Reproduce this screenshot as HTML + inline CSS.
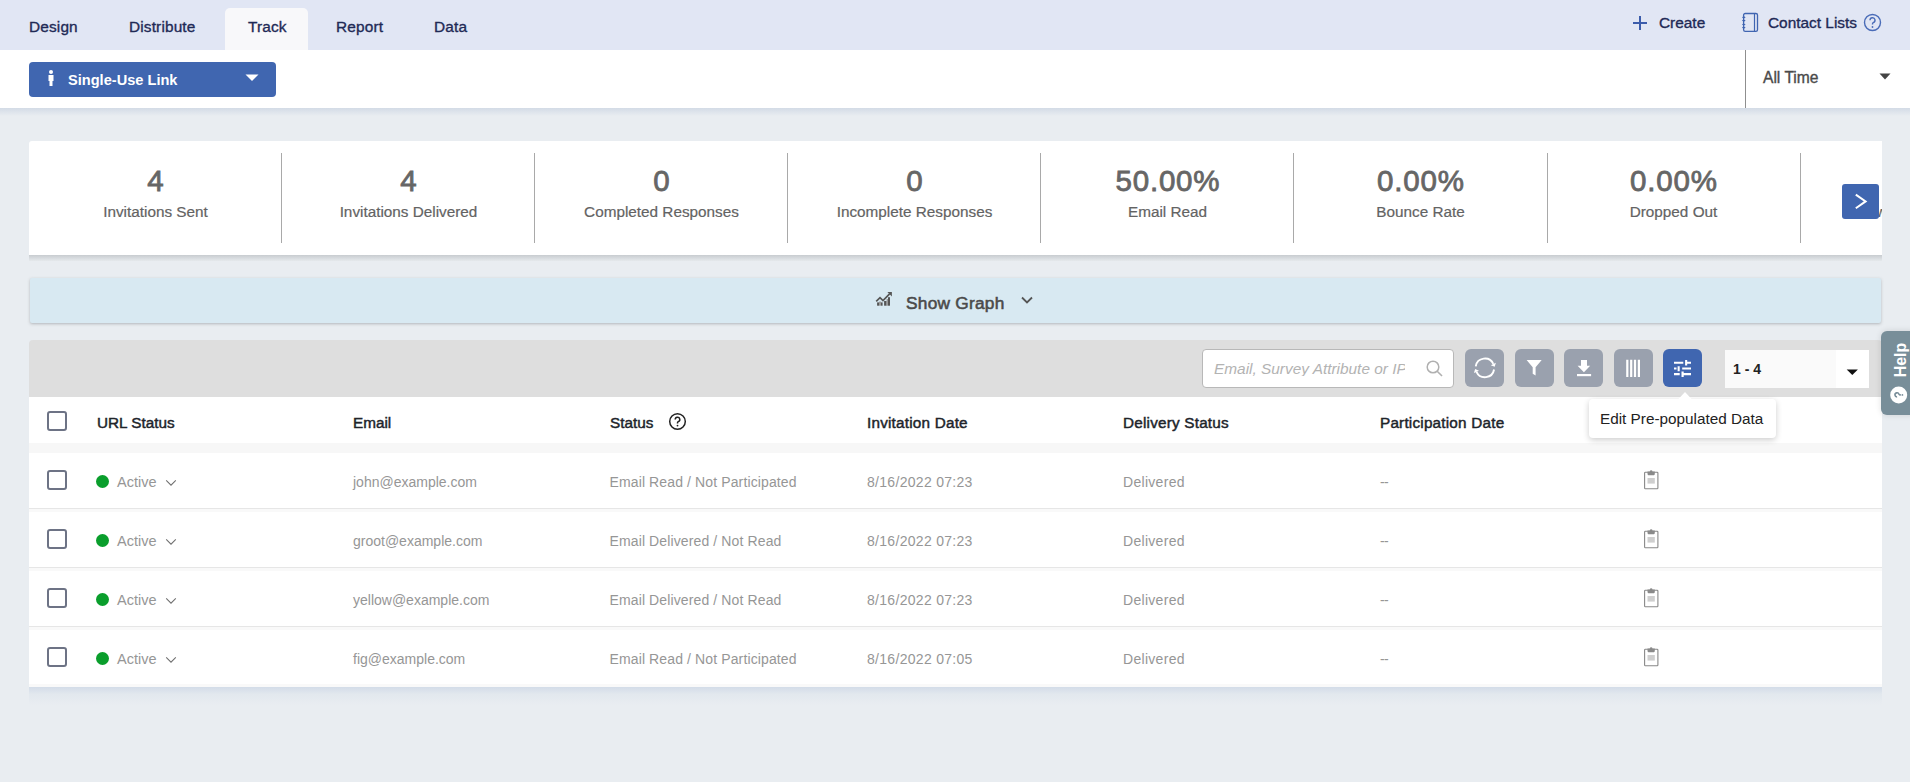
<!DOCTYPE html>
<html><head><meta charset="utf-8">
<style>
*{box-sizing:border-box;margin:0;padding:0}
html,body{width:1910px;height:782px;overflow:hidden}
body{background:#e9edf1;font-family:"Liberation Sans",sans-serif;position:relative}
.abs{position:absolute}
#nav{left:0;top:0;width:1910px;height:50px;background:#e1e6f4}
.tab{position:absolute;top:0;height:50px;font-weight:bold;font-size:14.5px;color:#1f2a56;line-height:52px;white-space:nowrap}
#tracktab{left:225px;top:8px;width:83px;height:42px;background:#f8f8fa;border-radius:5px 5px 0 0}
#sub{left:0;top:50px;width:1910px;height:58px;background:#fff}
#subh{left:0;top:108px;width:1910px;height:8px;background:linear-gradient(#d3dbe6,#e9edf1)}
#sul{left:29px;top:62px;width:247px;height:35px;background:#4066b0;border-radius:4px}
#divr{left:1745px;top:50px;width:1px;height:58px;background:#8f8f8f}
.txt{position:absolute;white-space:nowrap;line-height:1}
#stats{overflow:hidden;left:29px;top:141px;width:1853px;height:114px;background:#fff;border-radius:3px 0 0 0}
#statsh{left:29px;top:255px;width:1853px;height:6px;background:linear-gradient(#c8ccd0,#e5e9ec)}
.sdiv{position:absolute;top:12px;width:1px;height:90px;background:#a9a9a9}
.num{position:absolute;top:25px;width:253px;text-align:center;font-size:29.5px;letter-spacing:.8px;text-indent:.8px;-webkit-text-stroke:.8px #666;color:#666;line-height:1}
.lab{position:absolute;top:63px;width:253px;text-align:center;font-size:15.3px;color:#636363;-webkit-text-stroke:.2px #636363;line-height:1}
#graph{left:30px;top:278px;width:1851px;height:45px;background:#d8e9f2;border-radius:2px;box-shadow:0 1px 3px rgba(110,115,120,.45)}
#tool{left:29px;top:340px;width:1853px;height:57px;background:#dedede;border-radius:4px 4px 0 0}
#table{left:29px;top:397px;width:1853px;height:290px;background:#fff}
.ib{position:absolute;top:349px;width:39px;height:38px;background:#9aa1ae;border-radius:6px}
.cb{position:absolute;left:47px;width:20px;height:20px;border:2px solid #6d7385;border-radius:3px;background:#fff}
.hd{position:absolute;top:415px;font-size:15.3px;-webkit-text-stroke:.45px #20242a;color:#20242a;line-height:1;white-space:nowrap}
.cell{position:absolute;font-size:14px;color:#969696;line-height:1;white-space:nowrap}
.row{position:absolute;left:29px;width:1853px;height:59px;background:#fff;border-bottom:1px solid #e4e4e4}
.dot{position:absolute;left:96px;width:13px;height:13px;border-radius:50%;background:#0a9e2c}
</style></head>
<body>
<div id="nav" class="abs">
  <div id="tracktab" class="abs"></div>
  <div class="txt" style="left:29px;top:19px;letter-spacing:.15px;font-size:15.4px;-webkit-text-stroke:0.35px currentColor;color:#1f2a56">Design</div>
  <div class="txt" style="left:129px;top:19px;letter-spacing:.15px;font-size:15.4px;-webkit-text-stroke:0.35px currentColor;color:#1f2a56">Distribute</div>
  <div class="txt" style="left:248px;top:19px;letter-spacing:.15px;font-size:15.4px;-webkit-text-stroke:0.35px currentColor;color:#1f2a56">Track</div>
  <div class="txt" style="left:336px;top:19px;letter-spacing:.15px;font-size:15.4px;-webkit-text-stroke:0.35px currentColor;color:#1f2a56">Report</div>
  <div class="txt" style="left:434px;top:19px;letter-spacing:.15px;font-size:15.4px;-webkit-text-stroke:0.35px currentColor;color:#1f2a56">Data</div>
  <svg class="abs" style="left:1632px;top:15px" width="16" height="16" viewBox="0 0 16 16"><path d="M8 1V15M1 8H15" stroke="#3b5cab" stroke-width="2"/></svg>
  <div class="txt" style="left:1659px;top:15px;font-size:15.4px;-webkit-text-stroke:0.35px currentColor;color:#1f2a56">Create</div>
  <svg class="abs" style="left:1736px;top:8px" width="28" height="28" viewBox="0 0 28 28"><rect x="7.6" y="5.5" width="13.9" height="17.8" rx="1.6" fill="none" stroke="#4065b1" stroke-width="1.3"/><path d="M18.5 5.5V23.3" stroke="#4065b1" stroke-width="1.2"/><path d="M5.9 9.3L7.8 8.200000000000001L9.7 9.3L7.8 10.4ZM5.9 12.6L7.8 11.5L9.7 12.6L7.8 13.7ZM5.9 16.5L7.8 15.4L9.7 16.5L7.8 17.6ZM5.9 19.6L7.8 18.5L9.7 19.6L7.8 20.700000000000003Z" fill="#4065b1"/></svg>
  <div class="txt" style="left:1768px;top:15px;font-size:15.4px;-webkit-text-stroke:0.35px currentColor;color:#1f2a56">Contact Lists</div>
  <svg class="abs" style="left:1863px;top:13px" width="19" height="19" viewBox="0 0 19 19"><circle cx="9.5" cy="9.5" r="8" fill="none" stroke="#4a6cb8" stroke-width="1.4"/><path d="M7 7.3a2.5 2.5 0 1 1 3.3 2.3c-.6.3-.8.7-.8 1.4v.6" fill="none" stroke="#4a6cb8" stroke-width="1.4"/><circle cx="9.5" cy="14" r=".9" fill="#4a6cb8"/></svg>
</div>

<div id="sub" class="abs"></div>
<div id="subh" class="abs"></div>
<div id="sul" class="abs">
  <svg class="abs" style="left:18px;top:8px" width="8" height="17" viewBox="0 0 8 17"><circle cx="4" cy="2" r="2" fill="#fff"/><path d="M1.5 5H6.5V11H5.5V16H2.5V11H1.5Z" fill="#fff"/></svg>
  <div class="txt" style="left:39px;top:11px;font-weight:bold;font-size:14.6px;color:#fff">Single-Use Link</div>
  <svg class="abs" style="left:216px;top:12px" width="14" height="8" viewBox="0 0 14 8"><path d="M0.5 0.5H13.5L7 7Z" fill="#fff"/></svg>
</div>
<div id="divr" class="abs"></div>
<div class="txt" style="left:1763px;top:70px;font-size:15.6px;-webkit-text-stroke:0.35px currentColor;color:#4a4a4a">All Time</div>
<svg class="abs" style="left:1879px;top:73px" width="12" height="7" viewBox="0 0 12 7"><path d="M0.5 0.5H11.5L6 6.5Z" fill="#444"/></svg>

<div id="statsh" class="abs"></div>
<div id="stats" class="abs">
  <div class="sdiv" style="left:252px"></div>
  <div class="sdiv" style="left:505px"></div>
  <div class="sdiv" style="left:758px"></div>
  <div class="sdiv" style="left:1011px"></div>
  <div class="sdiv" style="left:1264px"></div>
  <div class="sdiv" style="left:1518px"></div>
  <div class="sdiv" style="left:1771px"></div>
  <div class="num" style="left:0">4</div><div class="lab" style="left:0">Invitations Sent</div>
  <div class="num" style="left:253px">4</div><div class="lab" style="left:253px">Invitations Delivered</div>
  <div class="num" style="left:506px">0</div><div class="lab" style="left:506px">Completed Responses</div>
  <div class="num" style="left:759px">0</div><div class="lab" style="left:759px">Incomplete Responses</div>
  <div class="num" style="left:1012px">50.00%</div><div class="lab" style="left:1012px">Email Read</div>
  <div class="num" style="left:1265px">0.00%</div><div class="lab" style="left:1265px">Bounce Rate</div>
  <div class="num" style="left:1518px">0.00%</div><div class="lab" style="left:1518px">Dropped Out</div>
  <div class="lab" style="left:1836px;width:60px;text-align:left">ww</div>
  <div class="abs" style="left:1813px;top:42.5px;width:37px;height:35px;background:#4066b0;border-radius:3px">
    <svg class="abs" style="left:0;top:0" width="37" height="35" viewBox="0 0 37 35"><path d="M13.8 10.6L23.6 17.4L13.8 24.2" fill="none" stroke="#fff" stroke-width="2"/></svg>
  </div>
</div>

<div id="graph" class="abs">
  <svg class="abs" style="left:840px;top:8px" width="28" height="24" viewBox="0 0 28 24">
 <path d="M6.2 15.3L10 11.7L13 14.6L19.6 7.9" fill="none" stroke="#555" stroke-width="1.7"/>
 <path d="M17.4 6H21.9V10.5Z" fill="#555"/>
 <rect x="7.1" y="16.4" width="1.9" height="3.3" fill="#555"/>
 <rect x="9" y="15.6" width="2" height="4.1" fill="#999"/>
 <rect x="11" y="16.4" width="1.6" height="3.3" fill="#555"/>
 <rect x="14.1" y="15" width="2.5" height="4.7" fill="#555"/>
 <rect x="16.6" y="13" width="1.4" height="6.7" fill="#999"/>
 <rect x="18" y="11.2" width="2" height="8.5" fill="#555"/>
</svg>
  <div class="txt" style="left:876px;top:17px;letter-spacing:.25px;font-size:17.3px;-webkit-text-stroke:0.55px currentColor;color:#4a4a4a">Show Graph</div>
  <svg class="abs" style="left:991px;top:18px" width="12" height="9" viewBox="0 0 12 9"><path d="M1 1.5L6 6.5L11 1.5" fill="none" stroke="#555" stroke-width="1.8"/></svg>
</div>

<div id="tool" class="abs"></div>
<div id="table" class="abs"></div>
<div class="abs" style="left:29px;top:508px;width:1853px;height:1px;background:#e6e6e6"></div>
<div class="abs" style="left:29px;top:509px;width:1853px;height:3px;background:#f9f9f9"></div>
<div class="abs" style="left:29px;top:567px;width:1853px;height:1px;background:#e6e6e6"></div>
<div class="abs" style="left:29px;top:568px;width:1853px;height:3px;background:#f9f9f9"></div>
<div class="abs" style="left:29px;top:626px;width:1853px;height:1px;background:#e6e6e6"></div>
<div class="abs" style="left:29px;top:627px;width:1853px;height:3px;background:#f9f9f9"></div>
<div class="abs" style="left:29px;top:684px;width:1853px;height:3px;background:#f9f9f9"></div>
<div class="abs" style="left:29px;top:687px;width:1853px;height:18px;background:linear-gradient(#d3dce8,#e2e8ee 40%,#e9edf1)"></div>
<div class="abs" style="left:1202px;top:349px;width:252px;height:39px;background:#fff;border:1px solid #b8b8b8;border-radius:4px">
  <div class="txt" style="left:11px;top:11px;font-style:italic;font-size:15.4px;color:#b3b3b3;width:191px;overflow:hidden">Email, Survey Attribute or IP Address</div>
  <svg class="abs" style="left:223px;top:10px" width="18" height="18" viewBox="0 0 18 18"><circle cx="7" cy="7" r="5.8" fill="none" stroke="#b0b0b0" stroke-width="1.5"/><path d="M11.2 11.2L16 16" stroke="#b0b0b0" stroke-width="1.6"/></svg>
</div>
<div class="ib" style="left:1465px"><svg class="abs" style="left:0;top:0" width="39" height="38" viewBox="0 0 39 38"><path d="M10.74 17.29A9.3 9.3 0 0 1 28.33 14.97M29.06 20.51A9.3 9.3 0 0 1 11.47 22.83" fill="none" stroke="#fff" stroke-width="1.9"/><path d="M30.87 13.79L25.79 16.15L29.68 17.87ZM8.93 24L14 21.65L10.12 19.93Z" fill="#fff"/></svg></div>
<div class="ib" style="left:1515px"><svg class="abs" style="left:0;top:0" width="39" height="38" viewBox="0 0 39 38"><path d="M11.6 11H26.7L20.6 18.2V26.5L17.7 24.8V18.2Z" fill="#fff"/></svg></div>
<div class="ib" style="left:1564px"><svg class="abs" style="left:0;top:0" width="39" height="38" viewBox="0 0 39 38"><path d="M17 11H23V16.7H26.2L19.9 23.2L13.6 16.7H17Z" fill="#fff"/><rect x="13" y="25" width="14.1" height="2.2" fill="#fff"/></svg></div>
<div class="ib" style="left:1614px"><svg class="abs" style="left:0;top:0" width="39" height="38" viewBox="0 0 39 38"><path d="M12.2 10.8h2.2v17.1h-2.2zM16.1 10.8h2.2v17.1h-2.2zM19.9 10.8h2.2v17.1h-2.2zM23.8 10.8h2.2v17.1h-2.2z" fill="#fff"/></svg></div>
<div class="ib" style="left:1663px;background:#4066b0"><svg class="abs" style="left:0;top:0" width="39" height="38" viewBox="0 0 39 38"><path d="M11 12.75h9.3v2.1H11zM22.1 11.1h2.1v5.4h-2.1zM24.2 12.75H28v2.1h-3.8zM11 18.45h2.5v2.1H11zM14.6 17.2h2.1v5h-2.1zM16.7 18.45h0v0zM19.2 18.45H28v2.1h-8.8zM11 24.05h5.7v2.1H11zM18.5 22.6h2.2V28h-2.2zM20.7 24.05H28v2.1h-7.3z" fill="#fff"/></svg></div>
<div class="abs" style="left:1725px;top:350px;width:144px;height:38px;background:#fff">
  <div class="abs" style="left:0;top:0;width:111px;height:38px;background:#fafafa"></div>
  <div class="txt" style="left:8px;top:12px;font-weight:bold;font-size:14px;color:#222">1 - 4</div>
  <svg class="abs" style="left:121px;top:19px" width="13" height="8" viewBox="0 0 13 8"><path d="M0.7 0.5H11.9L6.3 6Z" fill="#111"/></svg>
</div>

<div class="cb" style="top:411px"></div>
<div class="hd" style="left:97px">URL Status</div>
<div class="hd" style="left:353px">Email</div>
<div class="hd" style="left:610px">Status</div>
<div class="hd" style="left:867px;letter-spacing:.2px">Invitation Date</div>
<div class="hd" style="left:1123px;letter-spacing:.2px">Delivery Status</div>
<div class="hd" style="left:1380px;letter-spacing:.2px">Participation Date</div>
<svg class="abs" style="left:668px;top:412px" width="19" height="19" viewBox="0 0 19 19"><circle cx="9.5" cy="9.5" r="7.8" fill="none" stroke="#222" stroke-width="1.5"/><path d="M7.2 7.5a2.3 2.3 0 1 1 3.1 2.1c-.6.3-.8.6-.8 1.3v.6" fill="none" stroke="#222" stroke-width="1.5"/><circle cx="9.5" cy="13.6" r=".9" fill="#222"/></svg>
<div class="abs" style="left:29px;top:443px;width:1853px;height:10px;background:#f7f7f7"></div>
<div class="cb" style="top:470px"></div>
<div class="dot" style="top:475px"></div>
<div class="cell" style="left:117px;top:475px;font-size:14.5px">Active</div>
<svg class="abs" style="left:165px;top:479px" width="12" height="8" viewBox="0 0 12 8"><path d="M1.2 1.3L6 6.2L10.8 1.3" fill="none" stroke="#6f6f6f" stroke-width="1.05"/></svg>
<div class="cell" style="left:353px;top:475px">john@example.com</div>
<div class="cell" style="left:609.5px;top:475px;letter-spacing:.12px">Email Read / Not Participated</div>
<div class="cell" style="left:867px;top:475px;letter-spacing:.3px">8/16/2022 07:23</div>
<div class="cell" style="left:1123px;top:475px;letter-spacing:.3px">Delivered</div>
<div class="cell" style="left:1380px;top:475px;letter-spacing:-.7px">--</div>
<svg class="abs" style="left:1643px;top:469px" width="16" height="21" viewBox="0 0 16 21"><rect x="1.6" y="3.3" width="13.3" height="16.5" rx=".8" fill="none" stroke="#888" stroke-width="1.1"/><path d="M4.5 2.5h7.3v2.2c0 1.1-.8 1.6-1.6 1.6H6.1c-.9 0-1.6-.5-1.6-1.6Z" fill="#8a8a8a"/><circle cx="8.15" cy="2.6" r="1.3" fill="#8a8a8a"/><rect x="4.5" y="9" width="7.3" height="5.6" fill="#cfcfcf"/></svg>
<div class="cb" style="top:529px"></div>
<div class="dot" style="top:534px"></div>
<div class="cell" style="left:117px;top:534px;font-size:14.5px">Active</div>
<svg class="abs" style="left:165px;top:538px" width="12" height="8" viewBox="0 0 12 8"><path d="M1.2 1.3L6 6.2L10.8 1.3" fill="none" stroke="#6f6f6f" stroke-width="1.05"/></svg>
<div class="cell" style="left:353px;top:534px">groot@example.com</div>
<div class="cell" style="left:609.5px;top:534px;letter-spacing:.12px">Email Delivered / Not Read</div>
<div class="cell" style="left:867px;top:534px;letter-spacing:.3px">8/16/2022 07:23</div>
<div class="cell" style="left:1123px;top:534px;letter-spacing:.3px">Delivered</div>
<div class="cell" style="left:1380px;top:534px;letter-spacing:-.7px">--</div>
<svg class="abs" style="left:1643px;top:528px" width="16" height="21" viewBox="0 0 16 21"><rect x="1.6" y="3.3" width="13.3" height="16.5" rx=".8" fill="none" stroke="#888" stroke-width="1.1"/><path d="M4.5 2.5h7.3v2.2c0 1.1-.8 1.6-1.6 1.6H6.1c-.9 0-1.6-.5-1.6-1.6Z" fill="#8a8a8a"/><circle cx="8.15" cy="2.6" r="1.3" fill="#8a8a8a"/><rect x="4.5" y="9" width="7.3" height="5.6" fill="#cfcfcf"/></svg>
<div class="cb" style="top:588px"></div>
<div class="dot" style="top:593px"></div>
<div class="cell" style="left:117px;top:593px;font-size:14.5px">Active</div>
<svg class="abs" style="left:165px;top:597px" width="12" height="8" viewBox="0 0 12 8"><path d="M1.2 1.3L6 6.2L10.8 1.3" fill="none" stroke="#6f6f6f" stroke-width="1.05"/></svg>
<div class="cell" style="left:353px;top:593px">yellow@example.com</div>
<div class="cell" style="left:609.5px;top:593px;letter-spacing:.12px">Email Delivered / Not Read</div>
<div class="cell" style="left:867px;top:593px;letter-spacing:.3px">8/16/2022 07:23</div>
<div class="cell" style="left:1123px;top:593px;letter-spacing:.3px">Delivered</div>
<div class="cell" style="left:1380px;top:593px;letter-spacing:-.7px">--</div>
<svg class="abs" style="left:1643px;top:587px" width="16" height="21" viewBox="0 0 16 21"><rect x="1.6" y="3.3" width="13.3" height="16.5" rx=".8" fill="none" stroke="#888" stroke-width="1.1"/><path d="M4.5 2.5h7.3v2.2c0 1.1-.8 1.6-1.6 1.6H6.1c-.9 0-1.6-.5-1.6-1.6Z" fill="#8a8a8a"/><circle cx="8.15" cy="2.6" r="1.3" fill="#8a8a8a"/><rect x="4.5" y="9" width="7.3" height="5.6" fill="#cfcfcf"/></svg>
<div class="cb" style="top:647px"></div>
<div class="dot" style="top:652px"></div>
<div class="cell" style="left:117px;top:652px;font-size:14.5px">Active</div>
<svg class="abs" style="left:165px;top:656px" width="12" height="8" viewBox="0 0 12 8"><path d="M1.2 1.3L6 6.2L10.8 1.3" fill="none" stroke="#6f6f6f" stroke-width="1.05"/></svg>
<div class="cell" style="left:353px;top:652px">fig@example.com</div>
<div class="cell" style="left:609.5px;top:652px;letter-spacing:.12px">Email Read / Not Participated</div>
<div class="cell" style="left:867px;top:652px;letter-spacing:.3px">8/16/2022 07:05</div>
<div class="cell" style="left:1123px;top:652px;letter-spacing:.3px">Delivered</div>
<div class="cell" style="left:1380px;top:652px;letter-spacing:-.7px">--</div>
<svg class="abs" style="left:1643px;top:646px" width="16" height="21" viewBox="0 0 16 21"><rect x="1.6" y="3.3" width="13.3" height="16.5" rx=".8" fill="none" stroke="#888" stroke-width="1.1"/><path d="M4.5 2.5h7.3v2.2c0 1.1-.8 1.6-1.6 1.6H6.1c-.9 0-1.6-.5-1.6-1.6Z" fill="#8a8a8a"/><circle cx="8.15" cy="2.6" r="1.3" fill="#8a8a8a"/><rect x="4.5" y="9" width="7.3" height="5.6" fill="#cfcfcf"/></svg>
<svg class="abs" style="left:1676px;top:391px;z-index:2" width="18" height="10" viewBox="0 0 18 10"><path d="M1.5 9L9 1L16.5 9Z" fill="#fff"/></svg>
<div class="abs" style="left:1589px;top:399px;width:187px;height:39px;background:#fff;border-radius:4px;box-shadow:0 2px 6px rgba(0,0,0,.2)">
  <div class="txt" style="left:11px;top:12px;font-size:15.3px;color:#222">Edit Pre-populated Data</div>
</div>
<div class="abs" style="left:1881px;top:331px;width:35px;height:84px;background:#788e99;border-radius:6px 0 0 6px;box-shadow:0 0 6px rgba(0,0,0,.12)">
  <div class="txt" style="left:0px;top:21px;width:40px;height:16px;transform:rotate(-90deg);font-weight:bold;font-size:16px;color:#fff;text-align:center">Help</div>
  <svg class="abs" style="left:9px;top:55px" width="18" height="18" viewBox="0 0 18 18"><circle cx="8.7" cy="8.9" r="8.5" fill="#fff"/><g transform="rotate(-90 8.7 8.9)"><path d="M6.6 7.3a2.1 2.1 0 1 1 2.9 1.9c-.5.3-.8.6-.8 1.2v.6" fill="none" stroke="#788d99" stroke-width="1.6"/><circle cx="8.7" cy="12.6" r=".9" fill="#788d99"/></g></svg>
</div>

</body></html>
